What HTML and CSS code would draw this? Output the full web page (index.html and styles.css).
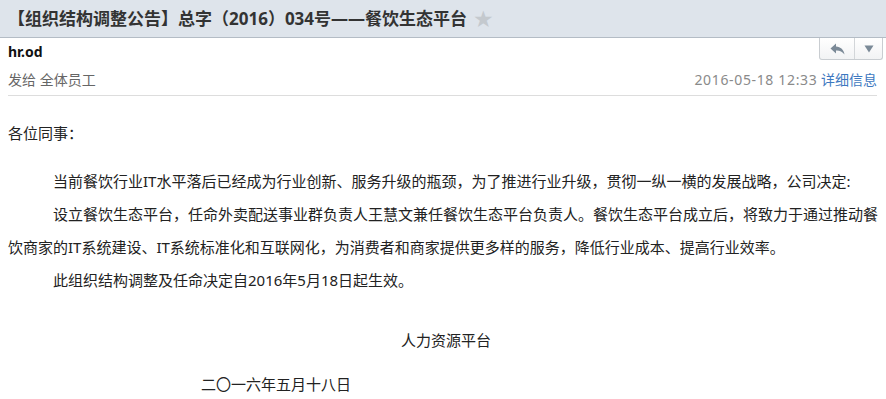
FILE: index.html
```html
<!DOCTYPE html>
<html lang="zh-CN">
<head>
<meta charset="utf-8">
<title>邮件</title>
<link rel="stylesheet" href="styles.css">
</head>
<body>
<div class="page">
  <header class="subject-bar">
    <h1 class="subject">【组织结构调整公告】总字（2016）034号——餐饮生态平台</h1>
    <span class="star">★</span>
  </header>
  <section class="meta">
    <div class="tools">
      <span class="tool tool-reply">
        <svg width="15" height="12" viewBox="0 0 15 12"><path d="M6 0.5 L0.5 5.5 L6 10.5 V7.6 C9.6 7.4 12.2 8.6 14.5 11.5 C13.8 6.6 10.8 3.8 6 3.4 Z" fill="#7b8a97"/></svg>
      </span>
      <span class="tool tool-more">
        <svg width="10" height="8" viewBox="0 0 10 8"><path d="M0.5 0.5 H9.5 L5 7.5 Z" fill="#7b8a97"/></svg>
      </span>
    </div>
    <div class="sender">hr.od</div>
    <div class="to-row">
      <span class="to">发给 全体员工</span>
      <span class="when"><span class="date">2016-05-18 12:33</span> <a class="detail">详细信息</a></span>
    </div>
  </section>
  <article class="content">
    <p class="greet">各位同事：</p>
    <p class="para">当前餐饮行业IT水平落后已经成为行业创新、服务升级的瓶颈，为了推进行业升级，贯彻一纵一横的发展战略，公司决定:</p>
    <p class="para">设立餐饮生态平台，任命外卖配送事业群负责人王慧文兼任餐饮生态平台负责人。餐饮生态平台成立后，将致力于通过推动餐饮商家的IT系统建设、IT系统标准化和互联网化，为消费者和商家提供更多样的服务，降低行业成本、提高行业效率。</p>
    <p class="para">此组织结构调整及任命决定自2016年5月18日起生效。</p>
    <p class="sign">人力资源平台</p>
    <p class="sign-date">二〇一六年五月十八日</p>
  </article>
</div>
</body>
</html>
```

FILE: styles.css
```css
html, body {
  margin: 0;
  padding: 0;
  background: #ffffff;
}
body {
  font-family: "Noto Sans", "Noto Sans CJK SC", sans-serif;
  color: #333333;
  overflow: hidden;
}
.page {
  position: relative;
  width: 886px;
}
.subject-bar {
  display: flex;
  align-items: center;
  height: 37px;
  padding: 0 8px;
  background: #dee4eb;
  border-bottom: 1px solid #b4bcc5;
}
.subject {
  margin: 0;
  font-size: 17px;
  font-weight: bold;
  color: #333333;
  line-height: 20px;
  white-space: nowrap;
}
.star {
  margin-left: 6px;
  font-family: "DejaVu Sans", sans-serif;
  font-size: 23px;
  color: #c4c9ce;
  line-height: 20px;
}
.meta {
  margin: 0 9px 0 8px;
  padding: 4px 0 5px;
  border-bottom: 1px solid #dddddd;
}
.tools {
  position: absolute;
  top: 38px;
  right: 3px;
  display: flex;
  height: 22px;
  border: 1px solid #c9cdd1;
  border-top: none;
  border-radius: 0 0 3px 3px;
  background: linear-gradient(#ffffff, #f2f3f4);
  box-sizing: border-box;
}
.tool {
  display: flex;
  align-items: center;
  justify-content: center;
}
.tool-reply {
  width: 34px;
  border-right: 1px solid #d3d6d9;
}
.tool-more {
  width: 27px;
}
.sender {
  font-size: 14px;
  font-weight: bold;
  color: #111111;
  line-height: 20px;
}
.to-row {
  display: flex;
  justify-content: space-between;
  align-items: center;
  margin-top: 8px;
  line-height: 20px;
  font-size: 14px;
}
.to {
  color: #666666;
}
.date {
  color: #8a8a8a;
  letter-spacing: 0.65px;
}
.detail {
  color: #3d78c0;
  text-decoration: none;
}
.content {
  padding: 21px 6px 0 8px;
  font-size: 15px;
  line-height: 33px;
  color: #222222;
}
.content p {
  margin: 0;
}
.greet {
  margin-bottom: 15px !important;
}
.para {
  text-indent: 45px;
}
.sign {
  margin-top: 27px !important;
  padding-left: 393px;
}
.sign-date {
  margin-top: 11px !important;
  padding-left: 193px;
}
```
